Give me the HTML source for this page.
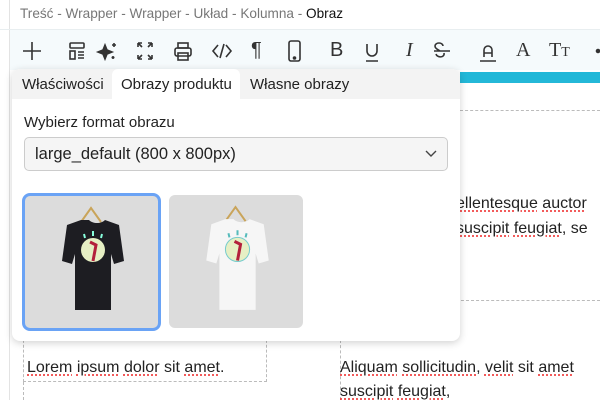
<!DOCTYPE html>
<html><head><meta charset="utf-8"><style>
*{box-sizing:border-box;margin:0;padding:0}
body{width:600px;height:400px;overflow:hidden;background:#fff;font-family:"Liberation Sans",sans-serif;position:relative;color:#222}
.abs{position:absolute}
.crumb{left:0;top:0;width:600px;height:30px;border-bottom:1px solid #e8eef0;font-size:13.6px;color:#777;padding:6px 0 0 20px}
.crumb b{font-weight:normal;color:#111}
.tb{left:10px;top:30px;width:590px;height:40px;background:#f5fafc}
.lv{left:9px;top:0;width:1px;height:400px;background:#e3e3e3}
.g{position:absolute;top:39px;font-size:20px;color:#333;line-height:22px}
.pop{left:12px;top:69px;width:448px;height:272px;background:#fff;border-radius:8px;box-shadow:0 2px 8px rgba(0,0,0,.18);overflow:hidden}
.tabs{height:30px;background:#f3f3f3;font-size:15px;position:relative}
.tabs span{position:absolute;top:7px}
.act{position:absolute;left:100px;top:0;width:128px;height:30px;background:#fff;border-radius:6px 6px 0 0}
.sel{left:24px;top:137px;width:424px;height:34px;background:#f5f5f5;border:1px solid #ccc;border-radius:5px;font-size:16.5px;padding:7px 0 0 10px}
.dash{border:0 dashed #bbb}
.txt{font-size:16px;color:#222}
.u{text-decoration:underline dotted #e33;text-underline-offset:3px}
</style></head><body>
<div class="abs lv"></div>
<div class="abs crumb">Treść - Wrapper - Wrapper - Układ - Kolumna - <b>Obraz</b></div>
<div class="abs tb"></div>
<svg class="abs" style="left:0;top:36px" width="600" height="30" fill="none" stroke="#333" stroke-width="1.6">
<path d="M32 6v18M23 15h18"/>
<rect x="70" y="7" width="14" height="5" rx="1"/><rect x="70" y="15" width="5" height="8"/><path d="M78 16h6M78 19h6M78 22h6"/>
<path d="M105 9l2 5 5 2-5 2-2 5-2-5-5-2 5-2z" fill="#333"/><path d="M114 7v4M112 9h4M113 20v3M111.5 21.5h3"/>
<path d="M138 7l4 4M138 7h4M138 7v4M152 7l-4 4M152 7h-4M152 7v4M138 23l4-4M138 23h4M138 23v-4M152 23l-4-4M152 23h-4M152 23v-4"/>
<rect x="175" y="12" width="16" height="8" rx="2"/><rect x="178" y="7" width="10" height="5"/><rect x="178" y="17" width="10" height="7"/>
<path d="M218 9l-5 6 5 6M226 9l5 6-5 6M224 8l-4 14"/>
<rect x="289" y="5" width="11" height="20" rx="2"/><circle cx="294.5" cy="22" r="1" fill="#333"/>
<path d="M367 8v7a5 5 0 0010 0v-7M366 25h12"/>
<path d="M443 10a4 3 0 00-8 0c0 3 4 4 5 5M434 15h16M436 18c1 4 9 4 8-1"/>
<path d="M484 21v-7a4 4 0 018 0v7M484 17h8M480 25h16"/>
<circle cx="598" cy="15" r="1.5" fill="#333"/>
</svg>
<div class="g" style="left:251px">¶</div>
<div class="g" style="left:330px">B</div>
<div class="g" style="left:406px;font-style:italic;font-family:'Liberation Serif',serif">I</div>
<div class="g" style="left:516px;font-family:'Liberation Serif',serif">A</div>
<div class="g" style="left:549px;font-family:'Liberation Serif',serif">T<span style="font-size:14px">T</span></div>
<div class="abs" style="left:460px;top:72px;width:140px;height:11px;background:#24b8d8"></div>
<div class="abs dash" style="left:460px;top:110px;width:140px;border-top-width:1px"></div>
<div class="abs dash" style="left:340px;top:300px;width:260px;border-top-width:1px"></div>
<div class="abs dash" style="left:340px;top:340px;height:60px;border-left-width:1px"></div>
<div class="abs dash" style="left:23px;top:335px;width:244px;height:47px;border-width:0 1px 1px 1px"></div>
<div class="abs dash" style="left:23px;top:382px;height:18px;border-left-width:1px"></div>
<div class="abs txt" style="left:456px;top:195px"><span class="u">ellentesque</span> <span class="u">auctor</span></div>
<div class="abs txt" style="left:456px;top:220px"><span class="u">suscipit</span> <span class="u">feugiat</span>, se</div>
<div class="abs txt" style="left:27px;top:359px"><span class="u">Lorem</span> <span class="u">ipsum</span> <span class="u">dolor</span> sit <span class="u">amet</span>.</div>
<div class="abs txt" style="left:340px;top:359px"><span class="u">Aliquam</span> <span class="u">sollicitudin</span>, <span class="u">velit</span> sit <span class="u">amet</span></div>
<div class="abs txt" style="left:340px;top:383px"><span class="u">suscipit</span> <span class="u">feugiat</span>,</div>
<div class="abs pop">
<div class="tabs"><div class="act"></div><span style="left:10px">Właściwości</span><span style="left:109px">Obrazy produktu</span><span style="left:238px">Własne obrazy</span></div>
<div style="position:absolute;left:12px;top:45px;font-size:15px">Wybierz format obrazu</div>
</div>
<div class="abs sel">large_default (800 x 800px)<svg style="position:absolute;right:10px;top:12px" width="12" height="8" fill="none" stroke="#444" stroke-width="1.4"><path d="M1 1l5 5 5-5"/></svg></div>
<div class="abs" style="left:22px;top:193px;width:139px;height:138px;border:3px solid #6aa3f5;border-radius:8px;background:#dcdcdc;overflow:hidden">
<svg width="133" height="132" viewBox="0 0 133 132"><path d="M56 26l10-14 10 14" fill="none" stroke="#c9a45a" stroke-width="2"/>
<path d="M56 24l-14 5-5 36 10 3 3-10 0 56 36 0 0-56 3 10 10-3-5-36-14-5c-4 4-12 4-16 0z" fill="#1d1d22"/>
<circle cx="68" cy="54" r="12" fill="#e6efc4"/><path d="M65 46l6 3-3 16" stroke="#b3203c" stroke-width="3" fill="none"/>
<path d="M59 38l1 4M68 35v5M77 38l-1 4" stroke="#8fd" stroke-width="2"/></svg></div>
<div class="abs" style="left:169px;top:195px;width:134px;height:133px;border-radius:6px;background:#dcdcdc;overflow:hidden">
<svg width="134" height="133" viewBox="0 0 133 132"><path d="M56 26l10-14 10 14" fill="none" stroke="#c9a45a" stroke-width="2"/>
<path d="M56 24l-14 5-5 36 10 3 3-10 0 56 36 0 0-56 3 10 10-3-5-36-14-5c-4 4-12 4-16 0z" fill="#f6f6f6"/>
<circle cx="68" cy="54" r="12" fill="#e6efc4" stroke="#7cc"/><path d="M65 46l6 3-3 16" stroke="#b3203c" stroke-width="3" fill="none"/>
<path d="M59 38l1 4M68 35v5M77 38l-1 4" stroke="#5bb" stroke-width="2"/></svg></div>
</body></html>
